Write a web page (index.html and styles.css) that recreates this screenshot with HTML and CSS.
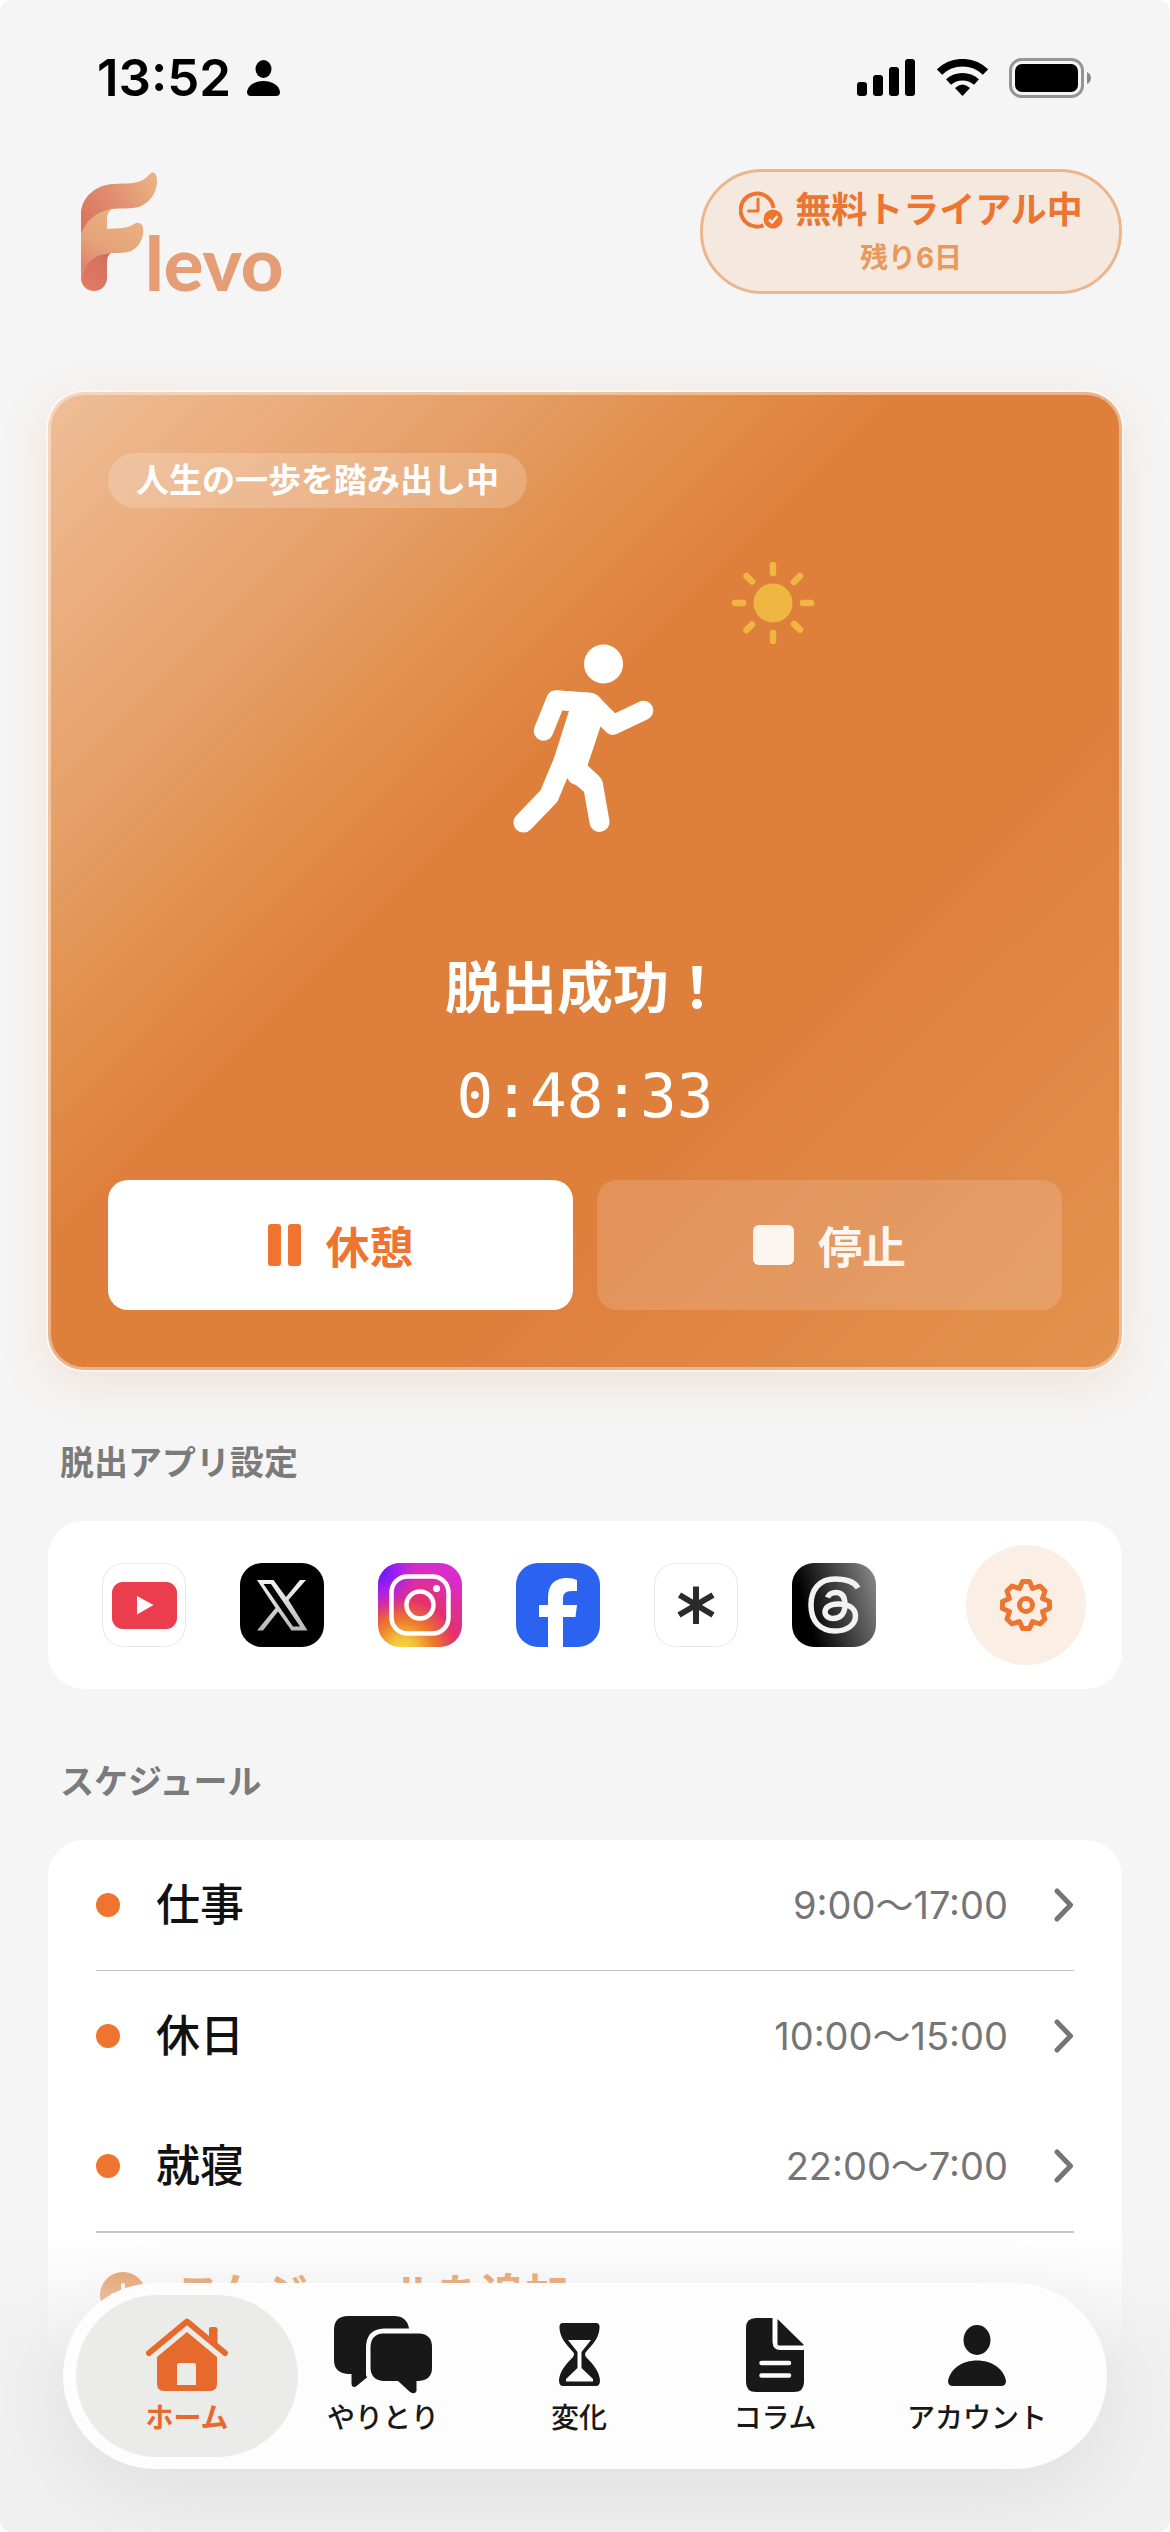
FILE: index.html
```html
<!DOCTYPE html>
<html lang="ja">
<head>
<meta charset="UTF-8">
<meta name="viewport" content="width=device-width, initial-scale=1">
<title>Flevo</title>
<link rel="stylesheet" href="styles.css">
</head>
<body>
<div class="app">

	<div class="status">
		<div class="status-left">
			<span class="clock">13:52</span>
			<svg width="33" height="36" viewBox="0 0 33 36"><ellipse cx="16.500" cy="9" rx="8" ry="9"/><path d="M0 32C1 25 8 21 16.500 21S32 25 33 32Q33 36 29 36H4Q0 36 0 32Z"/></svg>
		</div>
		<div class="status-right">
			<svg width="59" height="38" viewBox="0 0 59 38"><rect x="0" y="23" width="10" height="14" rx="3"/><rect x="16" y="16" width="10" height="21" rx="3"/><rect x="32" y="8" width="10" height="29" rx="3"/><rect x="48" y="0" width="10" height="37" rx="3"/></svg>
			<svg width="51" height="38" viewBox="0 0 51 38"><g fill="none" stroke="#000" stroke-width="7.500"><path d="M2.500 13A33 33 0 0 1 48.500 13"/><path d="M11.500 23A21 21 0 0 1 39.500 23"/></g><path d="M25.500 37L18 29Q25.500 22 33 29Z"/></svg>
			<svg width="83" height="40" viewBox="0 0 83 40"><rect x="1.500" y="1.500" width="72" height="37" rx="11" fill="none" stroke="#949494" stroke-width="3"/><rect x="6" y="6" width="63" height="28" rx="7"/><path d="M78 14Q82 16 82 20T78 26Z" fill="#888"/></svg>
		</div>
	</div>

	<header class="header">
		<div class="logo">
			<svg width="76" height="119" viewBox="0 0 76 119">
				<defs>
					<linearGradient id="fTop" x1="0" y1="0.700" x2="1" y2="0.200"><stop offset="0" stop-color="#da7562"/><stop offset="0.450" stop-color="#e18e70"/><stop offset="1" stop-color="#e9b282"/></linearGradient>
					<linearGradient id="fMid" x1="0.100" y1="1" x2="0.600" y2="0"><stop offset="0" stop-color="#dd7d66"/><stop offset="0.450" stop-color="#e5a27a"/><stop offset="1" stop-color="#e9b282"/></linearGradient>
					<linearGradient id="fStem" x1="1" y1="0" x2="0.300" y2="1"><stop offset="0" stop-color="#cf6e60"/><stop offset="1" stop-color="#e07b62"/></linearGradient>
				</defs>
				<path d="M0 105C4 90 14 80 30 81Q26 84 26 89V106A13 13 0 0 1 0 106Z" fill="url(#fStem)"/>
				<path d="M0 105V60C4 46 14 37 32 36Q26 40 26 47V57C38 56 46 57 53 52Q58 49 61 53Q63 56 62 63C60 71 56 76 50 79C42 82 34 80 24 82C12 84 3 92 0 105Z" fill="url(#fMid)"/>
				<path d="M0 62V42C0 26 14 13 32 12C46 11 58 13 67 4C71 -1 74 -1 76 6C77 18 71 30 58 35C50 37 40 36 30 37C14 40 4 50 0 62Z" fill="url(#fTop)"/>
			</svg>
			<span class="logo-text">levo</span>
		</div>
		<button class="trial" type="button">
			<span class="trial-main">
				<svg width="44" height="38" viewBox="0 0 44 38"><g fill="none" stroke="#ee7430" stroke-linecap="butt"><path d="M34.500 17A16.500 16.500 0 1 0 24.500 34.300" stroke-width="4"/><path d="M19 8V20H9.500" stroke-width="3" stroke-linecap="round" stroke-linejoin="round"/></g><circle cx="34" cy="28" r="9.500" fill="#ee7430"/><path d="M30 28.500L33 31.500L38.500 25" fill="none" stroke="#f5e8df" stroke-width="2.500"/></svg>
				無料トライアル中
			</span>
			<span class="trial-sub">残り6日</span>
		</button>
	</header>

	<main class="main">
		<section class="hero">
			<span class="badge">人生の一歩を踏み出し中</span>
			<svg class="scene" width="460" height="271" viewBox="355 562 460 271">
				<!-- sun -->
				<circle cx="773" cy="603" r="19.500" fill="#efb741"/>
				<g stroke="#efb741" stroke-width="6.500" stroke-linecap="round">
					<path d="M773 565V573M773 633V641M735 603H743M803 603H811M746.500 576L752 581.500M794 624L800 629.500M746.500 630L752 624.500M794 582L800 576"/>
				</g>
				<!-- walker -->
				<g fill="none" stroke="#fff" stroke-linecap="round" stroke-linejoin="round">
					<circle cx="603.500" cy="664" r="19.500" fill="#fff" stroke="none"/>
					<path d="M543.500 731L556 700L591 703L613 725L643.500 710.500" stroke-width="19.500"/>
					<path d="M577 775L580 772L592 783" stroke-width="20"/>
					<path d="M564 760L549 796L523.500 822.500" stroke-width="20"/>
					<path d="M593 785L599.500 822" stroke-width="20"/>
				</g>
				<path d="M556 690.500L589 692.500Q598 693 603 702L607 712L600 728L587 767L601 779Q603 782 603 785L590 795L583 791L567.500 778L554 758L569 711L562 710Z" fill="#fff"/>
			</svg>
			<h1 class="hero-title">脱出成功！</h1>
			<p class="timer">0:48:33</p>
			<div class="actions">
				<button class="action pause" type="button">
					<svg width="34" height="42" viewBox="0 0 34 42"><rect width="13" height="42" rx="3"/><rect x="20" width="13" height="42" rx="3"/></svg>
					休憩
				</button>
				<button class="action stop" type="button">
					<svg width="41" height="40" viewBox="0 0 41 40"><rect width="41" height="40" rx="6"/></svg>
					停止
				</button>
			</div>
		</section>

		<h2 class="section-title">脱出アプリ設定</h2>
		<section class="card apps">
			<ul class="app-list">
				<li class="app-icon outlined">
					<svg viewBox="0 0 84 84"><rect x="10" y="19" width="65" height="47" rx="11" fill="#eb3d4e"/><path d="M35 33L51.500 42L35 51.500Z" fill="#fff"/></svg>
				</li>
				<li class="app-icon">
					<svg viewBox="0 0 84 84">
						<defs><linearGradient id="xg" x1="0" y1="0" x2="0" y2="1"><stop offset="0" stop-color="#f4f4f4"/><stop offset="1" stop-color="#b8b8b8"/></linearGradient></defs>
						<rect width="84" height="84" fill="#000"/>
						<path d="M17 17H33.500L46 34L60 17H66L48.500 37L67.500 67.500H51.500L38 48.500L23 67.500H17L35.500 45ZM23.500 21L53 63.500H60L31 21Z" fill="url(#xg)" fill-rule="evenodd"/>
					</svg>
				</li>
				<li class="app-icon">
					<svg viewBox="0 0 84 84">
						<defs>
							<radialGradient id="igA" cx="0.300" cy="1.050" r="1.050"><stop offset="0" stop-color="#f6dc45"/><stop offset="0.150" stop-color="#f2c238"/><stop offset="0.350" stop-color="#ee7a2c"/><stop offset="0.600" stop-color="#e4306c"/><stop offset="1" stop-color="#d92ccc"/></radialGradient>
							<radialGradient id="igB" cx="0" cy="0.100" r="0.550"><stop offset="0" stop-color="#5a18ff"/><stop offset="0.500" stop-color="#a820f0" stop-opacity="0.850"/><stop offset="1" stop-color="#d92ccc" stop-opacity="0"/></radialGradient>
						</defs>
						<rect width="84" height="84" fill="url(#igA)"/>
						<rect width="84" height="84" fill="url(#igB)"/>
						<g fill="none" stroke="#fff" stroke-width="4.500"><rect x="13.500" y="13.500" width="57" height="57" rx="16"/><circle cx="42" cy="42" r="13.500"/></g>
						<circle cx="58.500" cy="25.500" r="3.500" fill="#fff"/>
					</svg>
				</li>
				<li class="app-icon">
					<svg viewBox="0 0 84 84"><rect width="84" height="84" fill="#2b62f0"/><path d="M32 84V54H23V42H32V35C32 21 39 15 51 15Q57 15 61 17V28H56C49 28 47 31 47 36V42H61L59.500 54H47V84Z" fill="#fff"/></svg>
				</li>
				<li class="app-icon outlined">
					<svg viewBox="0 0 84 84"><path d="M42 23.500V61M25.500 32L59 52M59 32L25 52" stroke="#2b2b2b" stroke-width="6" fill="none"/></svg>
				</li>
				<li class="app-icon">
					<svg viewBox="0 0 84 84">
						<defs><linearGradient id="th" x1="0" y1="0.600" x2="1" y2="0.300"><stop offset="0.150" stop-color="#000"/><stop offset="1" stop-color="#808080"/></linearGradient></defs>
						<rect width="84" height="84" fill="url(#th)"/>
						<path d="M66 25C62 18 53 16 43 16C27 16 19 27 19 42C19 58 28 68 43 68C55 68 63.500 62 63.500 53C63.500 44 55 41 46 41C37 41 33 45 33 49C33 53 37 55.500 41 55.500C49 55.500 53 50 53 42C53 34 50 29.500 44 29.500C39 29.500 37 31 35.500 34.500" fill="none" stroke="#f2f2f2" stroke-width="5.500"/>
					</svg>
				</li>
			</ul>
			<button class="gear" type="button" aria-label="設定">
				<svg width="54" height="54" viewBox="-27 -27 54 54" fill="none" stroke="#ea7631" stroke-width="5" stroke-linejoin="round"><path d="M-3.500 -23.500H3.500L6.500 -16.500L14 -19L19 -14L16.500 -6.500L23.500 -3.500V3.500L16.500 6.500L19 14L14 19L6.500 16.500L3.500 23.500H-3.500L-6.500 16.500L-14 19L-19 14L-16.500 6.500L-23.500 3.500V-3.500L-16.500 -6.500L-19 -14L-14 -19L-6.500 -16.500Z"/><circle r="6.500"/></svg>
			</button>
		</section>

		<h2 class="section-title">スケジュール</h2>
		<ul class="card schedule">
			<li><a class="row line" href="#">
				<span class="dot"></span><span class="name">仕事</span><span class="time">9:00〜17:00</span>
				<svg class="chevron" width="20" height="34" viewBox="0 0 20 34"><path d="M3 3L16.500 17L3 31"/></svg>
			</a></li>
			<li><a class="row" href="#">
				<span class="dot"></span><span class="name">休日</span><span class="time">10:00〜15:00</span>
				<svg class="chevron" width="20" height="34" viewBox="0 0 20 34"><path d="M3 3L16.500 17L3 31"/></svg>
			</a></li>
			<li><a class="row line thick" href="#">
				<span class="dot"></span><span class="name">就寝</span><span class="time">22:00〜7:00</span>
				<svg class="chevron" width="20" height="34" viewBox="0 0 20 34"><path d="M3 3L16.500 17L3 31"/></svg>
			</a></li>
			<li><button class="row add" type="button">
				<svg width="46" height="46" viewBox="0 0 46 46"><circle cx="23" cy="23" r="23" fill="#e78d48"/><path d="M23 13V33M13 23H33" stroke="#fff" stroke-width="4" stroke-linecap="round"/></svg>
				スケジュールを追加
			</button></li>
		</ul>
	</main>

	<div class="fade"></div>
	<nav class="tabbar">
		<a class="tab active" href="#">
			<svg width="82" height="78" viewBox="0 0 82 78"><path d="M3 37L41 5.500L79 37" fill="none" stroke="currentColor" stroke-width="6" stroke-linecap="round" stroke-linejoin="round"/><path d="M63 13Q63 11 65 11H69Q71.500 11 71.500 13V32L63 25Z"/><path d="M41 16L71 41V68Q71 75 64 75H18Q11 75 11 68V41ZM33 47Q31 47 31 49V69H50V49Q50 47 48 47Z" fill-rule="evenodd"/></svg>
			ホーム
		</a>
		<a class="tab" href="#">
			<svg width="98" height="78" viewBox="0 0 98 78"><path d="M14 0H60Q73 0 75 12.500H50Q32 13 32 32V58Q32 61 33.500 61L22 70.500Q18 72 17.500 68V58H14Q0 57 0 44V14Q0 0 14 0Z"/><path d="M49 17.500H85Q98 18 98 31V52Q98 64 85 65H82.500V75Q81 79 76 76L64 65H49Q37 64 36.500 52V31Q37 18 49 17.500Z"/></svg>
			やりとり
		</a>
		<a class="tab" href="#">
			<svg width="41" height="78" viewBox="0 -7 41 78"><path d="M4 0H37Q41 0 40.500 5C40 15 34 21 27 29Q25 31 27 34C34 41 40 48 41 57Q41 63 37 63H4Q0 63 0 57C1 48 7 41 14 34Q16 31 14 29C7 21 1 15 .5 5Q0 0 4 0ZM9 17L18.500 29V45L7 56V58.500H34V56L22.500 45V29L32 17Z" fill-rule="evenodd"/></svg>
			変化
		</a>
		<a class="tab" href="#">
			<svg width="58" height="78" viewBox="0 -2 58 78"><path d="M10 0H26.500V24Q27 32 34 32H58V64Q58 74 48 74H10Q0 74 0 64V10Q0 0 10 0Z"/><path d="M31.500 1L57.500 26.500V27.500H33Q31.500 27.500 31.500 26Z"/><path d="M15.500 45H43M15.500 57.500H43" stroke="#fdfdfd" stroke-width="4.500" stroke-linecap="round"/></svg>
			コラム
		</a>
		<a class="tab" href="#">
			<svg width="58" height="78" viewBox="0 -9 58 78"><ellipse cx="29" cy="15" rx="13.500" ry="15"/><path d="M0 56C2 44 14 35.500 29 35.500S56 44 58 56Q58 61 53 61H5Q0 61 0 56Z"/></svg>
			アカウント
		</a>
	</nav>

</div>
</body>
</html>
```

FILE: styles.css
```css
* {
	box-sizing: border-box;
}

body {
	margin: 0;
	background: #fff;
	color: #111;
	font-family: Inter, "Noto Sans CJK JP", sans-serif;
}

h1, h2, p, ul {
	margin: 0;
	padding: 0;
}

ul {
	list-style: none;
}

a {
	color: inherit;
	text-decoration: none;
}

button {
	border: 0;
	padding: 0;
	font-family: inherit;
	cursor: pointer;
}

svg {
	display: block;
	flex: none;
}

.app {
	position: relative;
	height: 100vh;
	overflow: hidden;
	background: #f5f5f5;
	border-radius: 12px;
}

/* status bar */
.status {
	display: flex;
	justify-content: space-between;
	align-items: center;
	height: 156px;
	padding: 0 78px 0 97px;
}

.status-left {
	display: flex;
	align-items: center;
	gap: 16px;
}

.status-right {
	display: flex;
	align-items: center;
	gap: 21px;
}

.clock {
	font-size: 51px;
	line-height: 60px;
	font-weight: 600;
	color: #000;
}

/* header */
.header {
	display: flex;
	justify-content: space-between;
	align-items: center;
	padding: 13px 48px 98px 81px;
}

.logo {
	display: flex;
	align-items: baseline;
}

.logo-text {
	margin-left: -12px;
	font-family: Lato, sans-serif;
	font-size: 74px;
	line-height: 36px;
	font-weight: 900;
	color: #e59d76;
}

.trial {
	display: flex;
	flex-direction: column;
	align-items: center;
	width: 422px;
	height: 125px;
	padding-top: 14px;
	background: #f5e8df;
	border: 3px solid #ebb68c;
	border-radius: 62px;
}

.trial-main {
	display: flex;
	align-items: center;
	gap: 12px;
	font-size: 36px;
	line-height: 48px;
	font-weight: 700;
	color: #ea7631;
}

.trial-sub {
	font-size: 28px;
	line-height: 48px;
	font-weight: 700;
	color: #e8995c;
}

.main {
	padding: 0 48px;
}

/* hero card */
.hero {
	display: flex;
	flex-direction: column;
	align-items: center;
	padding: 58px 57px 57px;
	border: 3px solid rgba(255, 255, 255, 0.4);
	border-radius: 36px;
	background: linear-gradient(135deg, #efbe98 0%, #e69f67 22%, #e2914f 31%, #de803c 42%, #de7f3c 66%, #e08746 80%, #e3934f 100%) border-box;
	box-shadow: 0 0 0 2px rgba(255, 250, 244, 0.8), 0 12px 48px rgba(226, 125, 60, 0.18);
	color: #fff;
}

.badge {
	align-self: flex-start;
	padding: 0 28px;
	border-radius: 28px;
	background: rgba(255, 255, 255, 0.2);
	font-size: 33px;
	line-height: 55px;
	font-weight: 700;
}

.scene {
	margin-top: 54px;
}

.hero-title {
	margin-top: 119px;
	font-size: 56px;
	line-height: 72px;
	font-weight: 700;
}

.timer {
	margin-top: 36px;
	font-family: "DejaVu Sans Mono", monospace;
	font-size: 61px;
	line-height: 72px;
}

.actions {
	display: grid;
	grid-template-columns: 1fr 1fr;
	gap: 24px;
	width: 100%;
	margin-top: 48px;
}

.action {
	display: flex;
	justify-content: center;
	align-items: center;
	gap: 24px;
	height: 130px;
	border-radius: 20px;
	font-size: 44px;
	font-weight: 700;
}

.action svg {
	fill: currentColor;
}

.pause {
	background: #fff;
	color: #ee7430;
}

.stop {
	background: rgba(255, 255, 255, 0.15);
	color: #fdf5ef;
}

.section-title {
	margin: 69px 0 34px;
	padding-left: 12px;
	font-size: 34px;
	line-height: 48px;
	font-weight: 700;
	color: #7b7b7b;
}

.card {
	background: #fff;
	border-radius: 36px;
}

/* blocked apps */
.apps {
	display: flex;
	justify-content: space-between;
	align-items: center;
	padding: 24px 36px 24px 54px;
}

.app-list {
	display: flex;
	gap: 54px;
}

.app-icon {
	width: 84px;
	height: 84px;
	border-radius: 22px;
	overflow: hidden;
}

.outlined {
	box-shadow: inset 0 0 0 1px #e8e8e8;
}

.gear {
	display: flex;
	justify-content: center;
	align-items: center;
	width: 120px;
	height: 120px;
	border-radius: 50%;
	background: #fbeee4;
}

/* schedule */
.schedule {
	padding: 0 48px;
}

.row {
	display: flex;
	align-items: center;
	height: 130px;
}

.line {
	height: 131px;
	border-bottom: 1px solid #c6c6c6;
}

.thick {
	height: 132px;
	border-bottom-width: 2px;
}

.dot {
	width: 24px;
	height: 24px;
	border-radius: 50%;
	background: #ee7430;
}

.name {
	flex: 1;
	margin-left: 36px;
	font-size: 44px;
	line-height: 60px;
	font-weight: 500;
}

.time {
	margin-right: 46px;
	font-size: 38px;
	line-height: 48px;
	color: #757575;
}

.chevron {
	fill: none;
	stroke: #757575;
	stroke-width: 5;
	stroke-linecap: round;
	stroke-linejoin: round;
}

.add {
	width: 100%;
	padding: 0 0 6px 4px;
	gap: 30px;
	background: none;
	font-size: 44px;
	line-height: 60px;
	font-weight: 700;
	color: #e78d48;
}

/* list fades out behind the tab bar */
.fade {
	position: absolute;
	left: 0;
	right: 0;
	bottom: 0;
	height: 300px;
	background: linear-gradient(rgba(240, 240, 240, 0), #f0f0f0 45%);
}

/* tab bar floats over the list */
.tabbar {
	position: absolute;
	left: 63px;
	right: 63px;
	bottom: 63px;
	display: grid;
	grid-template-columns: repeat(4, 49fr) 52fr;
	padding: 12px 26px;
	border-radius: 93px;
	background: #fdfdfd;
	box-shadow: 0 24px 90px rgba(0, 0, 0, 0.07);
}

.tab {
	display: flex;
	flex-direction: column;
	align-items: center;
	height: 162px;
	padding-top: 21px;
	gap: 4px;
	font-size: 28px;
	line-height: 40px;
	font-weight: 500;
	color: #181818;
	white-space: nowrap;
}

.tab svg {
	fill: currentColor;
}

.active {
	margin: 0 -13px;
	border-radius: 81px;
	background: #ebebea;
	color: #e56a2c;
	font-weight: 700;
}
```
